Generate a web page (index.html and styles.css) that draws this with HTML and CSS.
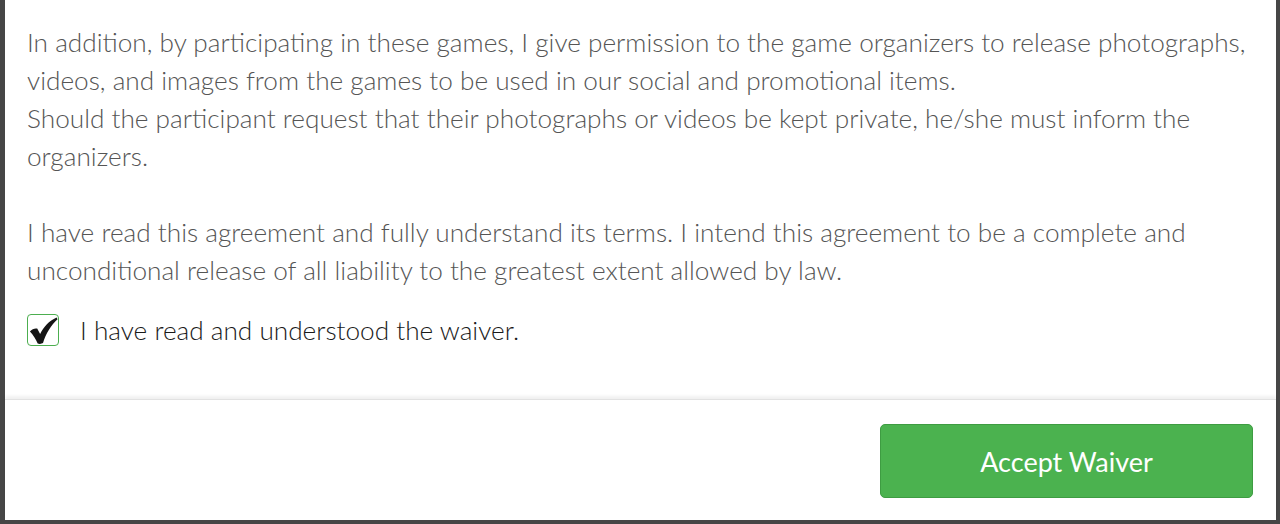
FILE: index.html
```html
<!DOCTYPE html>
<html>
<head>
<meta charset="utf-8">
<link rel="stylesheet" href="styles.css">
</head>
<body>
<div class="modal">
  <div class="modal-body">
    <p class="para">In addition, by participating in these games, I give permission to the game organizers to release photographs, videos, and images from the games to be used in our social and promotional items.<br>Should the participant request that their photographs or videos be kept private, he/she must inform the organizers.</p>
    <p class="para">I have read this agreement and fully understand its terms. I intend this agreement to be a complete and unconditional release of all liability to the greatest extent allowed by law.</p>
    <label class="check-row">
      <span class="checkbox">
        <svg width="31" height="31" viewBox="0 0 32 32"><path d="M2 17 C4 14.5 7 13.5 9.5 14 L12.5 19.5 C16.5 12 21.5 6 29.5 2.5 L30.5 4.5 C24 10.5 18.5 19 15.5 29 C14 30 11.5 30 10 29.5 C8 25 5.5 20.5 2 17 Z" fill="#151515"/></svg>
      </span>
      <span class="check-label">I have read and understood the waiver.</span>
    </label>
  </div>
  <div class="modal-footer">
    <button class="btn-accept">Accept Waiver</button>
  </div>
</div>
</body>
</html>
```

FILE: styles.css
```css
html, body {
  margin: 0;
  padding: 0;
}
body {
  background: #464646;
  height: 524px;
  overflow: hidden;
  font-family: Lato, "Liberation Sans", sans-serif;
}
.modal {
  margin-left: 5px;
  width: 1271px;
  height: 520px;
  background: #fff;
  display: flex;
  flex-direction: column;
}
.modal-body {
  padding: 23px 8px 0 22px;
  height: 399px;
  flex: none;
  box-sizing: border-box;
}
.para {
  margin: 0 0 38px 0;
  font-size: 26.2px;
  line-height: 38px;
  font-weight: 300;
  color: #555;
}
.para + .para {
  margin-bottom: 0;
}
.check-row {
  display: flex;
  align-items: center;
  margin-top: 23px;
}
.checkbox {
  width: 32px;
  height: 32px;
  box-sizing: border-box;
  border: 1.5px solid #4cae4f;
  border-radius: 4px;
  display: flex;
  align-items: center;
  justify-content: center;
}
.checkbox svg {
  display: block;
  flex: none;
}
.check-label {
  margin-left: 21px;
  font-size: 26.2px;
  font-weight: 300;
  color: #1a1a1a;
  line-height: 36px;
}
.modal-footer {
  flex: 1;
  border-top: 1px solid #e2e2e2;
  box-shadow: 0 -3px 3px rgba(0, 0, 0, 0.06);
  display: flex;
  justify-content: flex-end;
  align-items: flex-start;
  padding: 24px 23px 0 0;
}
.btn-accept {
  width: 373px;
  height: 74px;
  background: #4bb24f;
  border: 1px solid #3e9c42;
  border-radius: 5px;
  color: #fff;
  font-family: Lato, "Liberation Sans", sans-serif;
  font-size: 27px;
  font-weight: 400;
  cursor: pointer;
}
```
